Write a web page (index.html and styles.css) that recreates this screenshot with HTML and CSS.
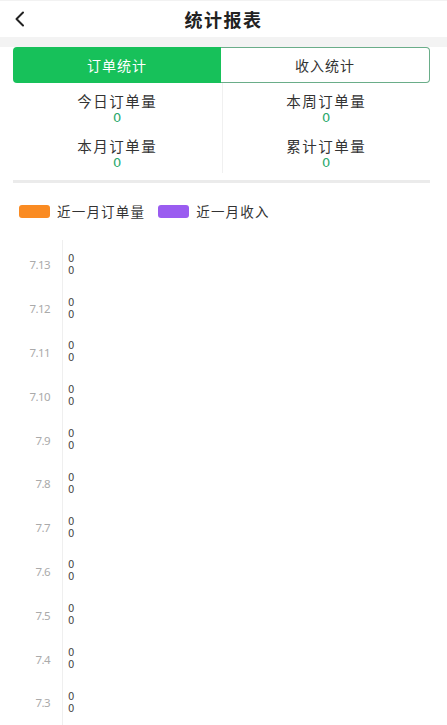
FILE: index.html
```html
<!DOCTYPE html>
<html lang="zh">
<head>
<meta charset="utf-8">
<title>统计报表</title>
<link rel="stylesheet" href="styles.css">
</head>
<body>
<header class="header">
  <div class="back">
    <svg width="12" height="16" viewBox="0 0 12 16"><path d="M9 1.5 L2.5 8 L9 14.5" fill="none" stroke="#222" stroke-width="2" stroke-linecap="round" stroke-linejoin="round"/></svg>
  </div>
  <h1 class="title">统计报表</h1>
  <div></div>
</header>
<div class="gap-bar"></div>
<div class="tabs">
  <div class="tab tab-active">订单统计</div>
  <div class="tab tab-idle">收入统计</div>
</div>
<div class="stats">
  <div class="stat"><div class="stat-label">今日订单量</div><div class="stat-value">0</div></div>
  <div class="stat stat-right"><div class="stat-label">本周订单量</div><div class="stat-value">0</div></div>
  <div class="stat"><div class="stat-label">本月订单量</div><div class="stat-value">0</div></div>
  <div class="stat stat-right"><div class="stat-label">累计订单量</div><div class="stat-value">0</div></div>
</div>
<div class="divider"></div>
<div class="legend">
  <span class="swatch swatch-orange"></span><span class="legend-text">近一月订单量</span>
  <span class="swatch swatch-purple"></span><span class="legend-text">近一月收入</span>
</div>
<div class="chart">
  <div class="row"><div class="date">7.13</div><div class="vals"><span>0</span><span>0</span></div></div>
  <div class="row"><div class="date">7.12</div><div class="vals"><span>0</span><span>0</span></div></div>
  <div class="row"><div class="date">7.11</div><div class="vals"><span>0</span><span>0</span></div></div>
  <div class="row"><div class="date">7.10</div><div class="vals"><span>0</span><span>0</span></div></div>
  <div class="row"><div class="date">7.9</div><div class="vals"><span>0</span><span>0</span></div></div>
  <div class="row"><div class="date">7.8</div><div class="vals"><span>0</span><span>0</span></div></div>
  <div class="row"><div class="date">7.7</div><div class="vals"><span>0</span><span>0</span></div></div>
  <div class="row"><div class="date">7.6</div><div class="vals"><span>0</span><span>0</span></div></div>
  <div class="row"><div class="date">7.5</div><div class="vals"><span>0</span><span>0</span></div></div>
  <div class="row"><div class="date">7.4</div><div class="vals"><span>0</span><span>0</span></div></div>
  <div class="row"><div class="date">7.3</div><div class="vals"><span>0</span><span>0</span></div></div>
</div>
</body>
</html>
```

FILE: styles.css
```css
* { box-sizing: border-box; }
html, body { margin: 0; padding: 0; background: #fff; }
body {
  font-family: "Noto Sans CJK SC", "Noto Sans", sans-serif;
  color: #333;
  overflow: hidden;
  height: 725px;
}
.header {
  height: 37px;
  display: grid;
  grid-template-columns: 1fr auto 1fr;
  align-items: center;
  border-top: 1px solid #f2f2f2;
}
.back { padding-left: 14px; display: flex; align-items: center; }
.title {
  margin: 0;
  font-size: 18px;
  font-weight: 700;
  color: #222;
  line-height: 24px;
  letter-spacing: 1.5px;
}
.gap-bar { height: 10px; background: #f3f3f3; }
.tabs {
  display: flex;
  height: 36px;
  margin: 0 17px 0 13px;
}
.tab {
  flex: 1;
  display: flex;
  align-items: center;
  justify-content: center;
  font-size: 14px;
  letter-spacing: 1px;
}
.tab-active {
  background: #17c15a;
  color: #fff;
  border-radius: 4px 0 0 4px;
}
.tab-idle {
  background: #fff;
  color: #333;
  border: 1.5px solid #6aad89;
  border-left: none;
  border-radius: 0 4px 4px 0;
}
.stats {
  display: grid;
  grid-template-columns: 1fr 1fr;
  margin: 0 17px 0 13px;
}
.stat {
  height: 45px;
  padding-top: 9px;
  text-align: center;
}
.stat-right { border-left: 1px solid #f0f0f0; }
.stat-label {
  font-size: 14.5px;
  line-height: 18px;
  color: #333;
  letter-spacing: 1.5px;
}
.stat-value {
  font-family: "DejaVu Sans", sans-serif;
  font-size: 13px;
  line-height: 16px;
  color: #2aa86b;
}
.divider {
  height: 3px;
  background: #ebebeb;
  margin: 7px 17px 0 13px;
}
.legend {
  display: flex;
  align-items: center;
  height: 20px;
  margin-top: 18px;
  padding-left: 19px;
}
.swatch {
  width: 31px;
  height: 13px;
  border-radius: 3px;
}
.swatch-orange { background: #fa8b22; }
.swatch-purple { background: #9a5cf0; margin-left: 13px; }
.legend-text {
  font-size: 13.5px;
  color: #333;
  margin-left: 7px;
  line-height: 20px;
  letter-spacing: 1.2px;
}
.chart {
  margin-top: 19px;
  display: flex;
  flex-direction: column;
  padding-top: 3px;
  position: relative;
  height: 486px;
}
.chart::before {
  content: "";
  position: absolute;
  left: 62px;
  top: 0;
  bottom: 0;
  border-left: 1px solid #efefef;
}
.row {
  height: 43.8px;
  flex: none;
  display: flex;
  align-items: center;
}
.date {
  width: 50px;
  text-align: right;
  font-family: "Noto Sans", sans-serif;
  font-size: 11.5px;
  letter-spacing: -0.6px;
  color: #aaa;
}
.vals {
  margin-left: 18px;
  display: flex;
  flex-direction: column;
  font-family: "DejaVu Sans", sans-serif;
  font-size: 10px;
  font-weight: 400;
  line-height: 12px;
  color: #444;
}
```
